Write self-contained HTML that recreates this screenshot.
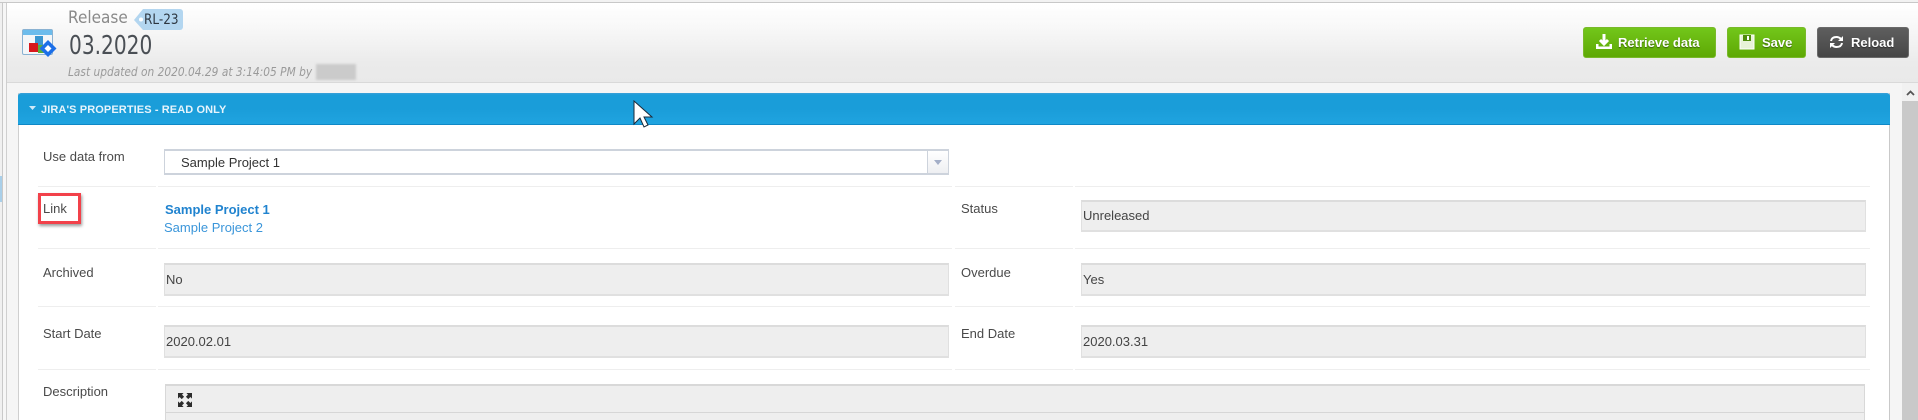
<!DOCTYPE html>
<html><head><meta charset="utf-8"><style>
*{box-sizing:border-box}
html,body{margin:0;padding:0}
body{width:1918px;height:420px;overflow:hidden;position:relative;background:#f5f5f5;font-family:"Liberation Sans",sans-serif;color:#444;font-size:13px;filter:blur(.35px)}
.a{position:absolute;white-space:nowrap}
.line{position:absolute;height:1px;background:#eeeeee}
.lab{position:absolute;left:43px;font-size:13px;line-height:16px;color:#4a4a4a;white-space:nowrap}
.f{position:absolute;background:#eeeeee;border:1px solid #e0e0e0;border-top:2px solid #dcdcdc;border-bottom:2px solid #e0e0e0;font-size:13px;color:#444;padding-left:1px;white-space:nowrap}
.btn{position:absolute;top:27px;height:31px;border-radius:3px;color:#fff;font-weight:bold;font-size:13px;line-height:31px;text-shadow:0 1px 1px rgba(0,0,0,.45);white-space:nowrap}
.g{background:linear-gradient(#72c61a,#5ea804);border:1px solid #79b92a}
.d{background:linear-gradient(#5e5e5e,#464646);border:1px solid #6a6a6a}
.btn span{position:absolute;top:-1px}
.btn svg{position:absolute}
</style></head><body>
<div class="a" style="left:0;top:0;width:1918px;height:2px;background:#f2f2f2"></div>
<div class="a" style="left:0;top:2px;width:1918px;height:1px;background:#c8c8c8"></div>
<div class="a" style="left:0;top:3px;width:2px;height:417px;background:#f0f0f0"></div>
<div class="a" style="left:0;top:176px;width:2px;height:26px;background:#a9cfe9"></div>
<div class="a" style="left:2px;top:3px;width:1px;height:417px;background:#c9c9c9"></div>
<div class="a" style="left:3px;top:3px;width:3px;height:417px;background:#f6f6f6"></div>
<div class="a" style="left:6px;top:3px;width:1px;height:417px;background:#cfcfcf"></div>

<div class="a" style="left:7px;top:3px;width:1911px;height:80px;background:linear-gradient(#ffffff 0%,#f8f8f8 30%,#ebebeb 75%,#e9e9e9 100%);border-bottom:1px solid #d9d9d9"></div>

<svg class="a" style="left:21px;top:28px" width="37" height="31" viewBox="0 0 37 31">
<rect x="1.500" y="1.500" width="30" height="25" rx="1.500" fill="#f4f6f8" stroke="#8ab2d2"/>
<rect x="2" y="2" width="29" height="5" fill="#6cbcec"/>
<rect x="14" y="8" width="8" height="10" fill="#3a96d0"/>
<rect x="8" y="15" width="9" height="9" fill="#d8171c"/>
<rect x="17" y="17" width="7" height="8" fill="#5cae3a"/>
<path d="M27 12L35.500 20.500L27 29L18.500 20.500Z" fill="#1c6fe8"/>
<path d="M27 17L30.500 20.500L27 24L23.500 20.500Z" fill="#fff"/>
</svg>

<div class="a" style="left:68px;top:8px;font-size:17px;line-height:20px;color:#8a8a8a;font-family:'DejaVu Sans',sans-serif;transform-origin:0 0;transform:scaleX(.9)">Release</div>
<svg class="a" style="left:133px;top:9px" width="50" height="21" viewBox="0 0 50 21"><path d="M10 0H47a3 3 0 0 1 3 3V18a3 3 0 0 1-3 3H10L1 11Z" fill="#b3d6f0"/><circle cx="8" cy="10.500" r="2" fill="#fff"/></svg>
<div class="a" style="left:144px;top:12px;font-size:14px;line-height:17px;color:#2d3640;font-family:'DejaVu Sans',sans-serif;transform-origin:0 0;transform:scaleX(.86)">RL-23</div>
<div class="a" style="left:69px;top:30px;font-size:26px;line-height:32px;color:#4a4f55;font-family:'DejaVu Sans',sans-serif;transform-origin:0 0;transform:scaleX(.775)">03.2020</div>
<div class="a" style="left:68px;top:64px;font-size:12px;line-height:16px;color:#9a9a9a;font-style:italic;font-family:'DejaVu Sans',sans-serif;transform-origin:0 0;transform:scaleX(.885)">Last updated on 2020.04.29 at 3:14:05 PM by</div>
<div class="a" style="left:316px;top:64px;width:40px;height:16px;background:#cbcbcb;filter:blur(1px)"></div>

<div class="btn g" style="left:1583px;width:133px"><svg style="left:11px;top:5px" width="18" height="18" viewBox="0 0 18 18"><path d="M9 1V10M5 7L9 11L13 7" fill="none" stroke="#fff" stroke-width="3"/><path d="M1 11V16H17V11H14.500V13.500H3.500V11Z" fill="#fff"/></svg><span style="left:34px">Retrieve data</span></div>
<div class="btn g" style="left:1727px;width:79px"><svg style="left:11px;top:6px" width="16" height="16" viewBox="0 0 16 16"><path d="M1 1H15V15H1Z" fill="#e8f3d8" stroke="#fff"/><rect x="4" y="1" width="8" height="6" fill="#4f8d0b"/><rect x="8" y="2" width="2" height="4" fill="#fff"/></svg><span style="left:34px">Save</span></div>
<div class="btn d" style="left:1817px;width:92px"><svg style="left:11px;top:7px" width="15" height="14" viewBox="0 0 15 14"><path d="M2 6C2.500 3 5 2 7.500 2C9.500 2 11 3 12 4M13 8C12.500 11 10 12 7.500 12C5.500 12 4 11 3 10" fill="none" stroke="#fff" stroke-width="2"/><path d="M14 1V6H9ZM1 13V8H6Z" fill="#fff"/></svg><span style="left:33px">Reload</span></div>

<div class="a" style="left:18px;top:93px;width:1872px;height:327px;background:#fff;border-left:1px solid #cfcfcf;border-right:1px solid #c9c9c9"></div>
<div class="a" style="left:18px;top:93px;width:1872px;height:32px;border-radius:3px 3px 0 0;background:linear-gradient(#3d9fd8 0,#1a9dd9 2px,#1a9dd9 50%,#20a4e0 100%);border-bottom:1px solid #0f88c6"></div>
<svg class="a" style="left:29px;top:106px" width="8" height="6"><path d="M0 0H7L3.500 4Z" fill="#cfe9f8"/></svg>
<div class="a" style="left:41px;top:102px;font-size:11px;line-height:16px;font-weight:bold;color:#e6f4fc;letter-spacing:.1px">JIRA'S PROPERTIES - READ ONLY</div>
<svg class="a" style="left:633px;top:100px" width="22" height="30" viewBox="0 0 22 30"><path d="M1 1V24L7 18L11 27L15 25L11 17L19 17Z" fill="#fff" stroke="#1a2a3a" stroke-width="1"/></svg>

<div class="lab" style="top:149px">Use data from</div>
<div class="a" style="left:164px;top:149px;width:785px;height:26px;background:#fff;border:1px solid #cdd3dc;border-top-width:2px;border-bottom-width:2px"></div>
<div class="a" style="left:181px;top:155px;font-size:13px;line-height:16px;color:#333">Sample Project 1</div>
<div class="a" style="left:927px;top:151px;width:22px;height:22px;background:linear-gradient(#ffffff,#eeeff2);border-left:1px solid #cdd3dc;border-right:1px solid #cdd3dc"></div>
<svg class="a" style="left:934px;top:160px" width="9" height="6"><path d="M0 0H8L4 5Z" fill="#a4afc8"/></svg>

<div class="line" style="left:38px;top:186px;width:118px"></div><div class="line" style="left:158px;top:186px;width:794px"></div><div class="line" style="left:955px;top:186px;width:118px"></div><div class="line" style="left:1075px;top:186px;width:795px"></div>
<div class="line" style="left:38px;top:248px;width:118px"></div><div class="line" style="left:158px;top:248px;width:794px"></div><div class="line" style="left:955px;top:248px;width:118px"></div><div class="line" style="left:1075px;top:248px;width:795px"></div>
<div class="line" style="left:38px;top:306px;width:118px"></div><div class="line" style="left:158px;top:306px;width:794px"></div><div class="line" style="left:955px;top:306px;width:118px"></div><div class="line" style="left:1075px;top:306px;width:795px"></div>
<div class="line" style="left:38px;top:369px;width:118px"></div><div class="line" style="left:158px;top:369px;width:794px"></div><div class="line" style="left:955px;top:369px;width:118px"></div><div class="line" style="left:1075px;top:369px;width:795px"></div>

<div class="a" style="left:38px;top:193px;width:43px;height:31px;border:3px solid #f2414a;box-shadow:1px 2px 3px rgba(0,0,0,.4)"></div>
<div class="lab" style="top:201px">Link</div>
<div class="a" style="left:165px;top:202px;font-size:13px;line-height:16px;font-weight:bold;color:#2083cf">Sample Project 1</div>
<div class="a" style="left:164px;top:220px;font-size:13px;line-height:16px;color:#3b96da">Sample Project 2</div>
<div class="lab" style="left:961px;top:201px">Status</div>
<div class="f" style="left:1081px;top:200px;width:785px;height:32px;line-height:28px">Unreleased</div>

<div class="lab" style="top:265px">Archived</div>
<div class="f" style="left:164px;top:263px;width:785px;height:33px;line-height:29px">No</div>
<div class="lab" style="left:961px;top:265px">Overdue</div>
<div class="f" style="left:1081px;top:263px;width:785px;height:33px;line-height:29px">Yes</div>

<div class="lab" style="top:326px">Start Date</div>
<div class="f" style="left:164px;top:325px;width:785px;height:33px;line-height:29px">2020.02.01</div>
<div class="lab" style="left:961px;top:326px">End Date</div>
<div class="f" style="left:1081px;top:325px;width:785px;height:33px;line-height:29px">2020.03.31</div>

<div class="lab" style="top:384px">Description</div>
<div class="a" style="left:165px;top:384px;width:1700px;height:36px;background:#eeeeee;border:1px solid #d8d8d8;border-top-width:2px;border-bottom:0"></div>
<div class="a" style="left:166px;top:412px;width:1698px;height:1px;background:#d6d6d6"></div>
<svg class="a" style="left:178px;top:393px" width="14" height="14" viewBox="0 0 15 15" fill="#2c2c2c"><path d="M0 0H6L4.300 1.700L6.500 4L4 6.500L1.700 4.300L0 6ZM15 0V6L13.300 4.300L11 6.500L8.500 4L10.700 1.700L9 0ZM0 15V9L1.700 10.700L4 8.500L6.500 11L4.300 13.300L6 15ZM15 15H9L10.700 13.300L8.500 11L11 8.500L13.300 10.700L15 9Z"/></svg>

<div class="a" style="left:1902px;top:83px;width:16px;height:337px;background:#f1f1f1"></div>
<div class="a" style="left:1902px;top:101px;width:16px;height:319px;background:#c9c9c9"></div>
<svg class="a" style="left:1906px;top:90px" width="9" height="6"><path d="M1 5L4.500 1.500L8 5" fill="none" stroke="#555" stroke-width="1.800"/></svg>
</body></html>
